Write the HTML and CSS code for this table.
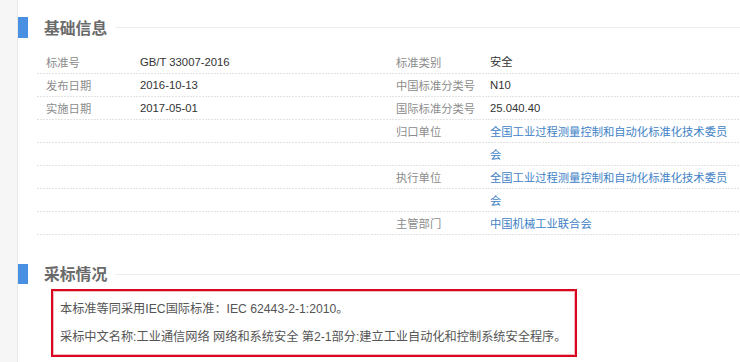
FILE: index.html
```html
<!DOCTYPE html>
<html lang="zh-CN">
<head>
<meta charset="utf-8">
<title>标准信息</title>
<link rel="stylesheet" href="styles.css">
</head>
<body>
<div class="page">
  <div class="sidebar"></div>
  <div class="main">
    <div class="sec-head first">
      <span class="bar"></span>
      <h2 class="sec-title">基础信息</h2>
      <span class="rule"></span>
    </div>
    <div class="info">
      <div class="col col-left">
        <div class="row"><span class="lab">标准号</span><span class="val">GB/T 33007-2016</span></div>
        <div class="row"><span class="lab">发布日期</span><span class="val">2016-10-13</span></div>
        <div class="row"><span class="lab">实施日期</span><span class="val">2017-05-01</span></div>
      </div>
      <div class="col col-right">
        <div class="row"><span class="lab">标准类别</span><span class="val">安全</span></div>
        <div class="row"><span class="lab">中国标准分类号</span><span class="val">N10</span></div>
        <div class="row"><span class="lab">国际标准分类号</span><span class="val">25.040.40</span></div>
        <div class="row"><span class="lab">归口单位</span><span class="val link">全国工业过程测量控制和自动化标准化技术委员会</span></div>
        <div class="row"><span class="lab">执行单位</span><span class="val link">全国工业过程测量控制和自动化标准化技术委员会</span></div>
        <div class="row"><span class="lab">主管部门</span><span class="val link">中国机械工业联合会</span></div>
      </div>
    </div>
    <div class="sec-head second">
      <span class="bar"></span>
      <h2 class="sec-title">采标情况</h2>
      <span class="rule"></span>
    </div>
    <div class="adopt">
      <p>本标准等同采用IEC国际标准：IEC 62443-2-1:2010。</p>
      <p>采标中文名称:工业通信网络 网络和系统安全 第2-1部分:建立工业自动化和控制系统安全程序。</p>
    </div>
  </div>
</div>
</body>
</html>
```

FILE: styles.css
```css
* { box-sizing: border-box; }
html, body {
  margin: 0;
  padding: 0;
  background: #fff;
  font-family: "Liberation Sans", Arial, "Noto Sans CJK SC", sans-serif;
  font-size: 11.3px;
  color: #333;
}
.page {
  display: flex;
  min-height: 362px;
  overflow: hidden;
}
.sidebar {
  width: 18px;
  flex: none;
  background: #f6f6f6;
  border-right: 1px solid #e6e6e6;
}
.main {
  flex: 1;
  min-width: 0;
}
.sec-head {
  display: flex;
  align-items: center;
}
.sec-head.first { margin-top: 17px; height: 21px; }
.sec-head.second { margin-top: 29px; height: 20px; }
.bar {
  width: 10px;
  height: 100%;
  background: #4a90e2;
  flex: none;
}
.sec-title {
  margin: 0 0 0 16px;
  font-family: "Noto Sans CJK SC", sans-serif;
  font-size: 15.8px;
  font-weight: bold;
  color: #6a6a6a;
  line-height: 20px;
}
.rule {
  flex: 1;
  height: 1px;
  margin-left: 8px;
  background: #ededed;
}
.info {
  display: flex;
  margin: 13px 0 0 18px;
}
.col {
  height: 184px;
  background-color: #fff;
  background-image:
    linear-gradient(to right, #fff 1px, transparent 1px),
    linear-gradient(to bottom, transparent 22px, #e2e2e2 22px);
  background-size: 3px 100%, 100% 23px;
  background-repeat: repeat, repeat;
}
.col-left {
  width: 334px;
  padding-left: 10px;
}
.col-right {
  flex: 1;
  padding-left: 26px;
}
.row {
  display: grid;
  grid-template-columns: 94px 243px;
  line-height: 23px;
}
.lab {
  color: #8c8c8c;
  font-family: "Noto Sans CJK SC", sans-serif;
  white-space: nowrap;
}
.val {
  color: #333;
}
.val.link {
  color: #4182c6;
  font-family: "Noto Sans CJK SC", sans-serif;
}
.adopt {
  margin: 5px 0 0 33px;
  width: 526px;
  border: 2px solid #d8061e;
  box-shadow: inset 0 0 0 1px #f3b7bf;
  padding: 10px 7px 10px 7px;
  color: #555;
  font-size: 12.2px;
}
.adopt p {
  margin: 0;
  line-height: 16px;
}
.adopt p + p {
  margin-top: 12px;
}
```
